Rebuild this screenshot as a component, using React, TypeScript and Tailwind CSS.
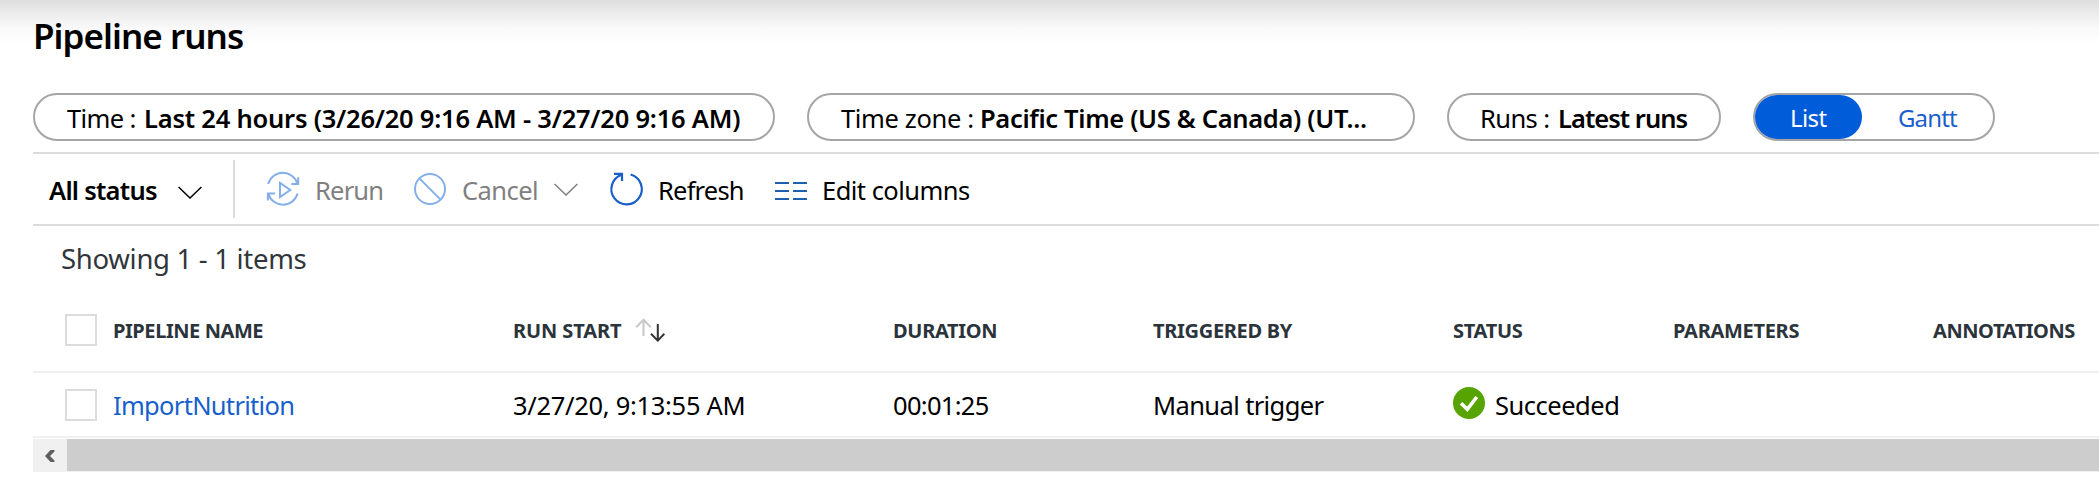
import type { ReactNode } from 'react';

function Pill({ className, children }: { className: string; children: ReactNode }) {
  return (
    <button
      className={`flex h-12 shrink-0 items-start whitespace-pre rounded-full border-2 border-[#a5a5a5] bg-white text-left text-[25.5px] leading-[46px] ${className}`}
    >
      {children}
    </button>
  );
}

function Chevron({ className }: { className: string }) {
  return (
    <svg viewBox="0 0 24 13" className={`h-[13px] w-6 shrink-0 ${className}`} fill="none" stroke="currentColor" strokeWidth="1.5">
      <path d="M.6 1 12 12 23.400 1" />
    </svg>
  );
}

function RerunIcon() {
  return (
    <svg viewBox="0 0 32 32" className="ml-8 size-8 shrink-0 overflow-visible text-[#84afe8]" fill="none" stroke="currentColor" strokeWidth="2">
      <path d="M1.200 11A15.200 15.200 0 0 1 30.400 10.600M31.200 4.200V11.100H24.300M30.600 20.500A15.200 15.200 0 0 1 1.400 20.900M.900 27.500V20.600H8" />
      <path d="M13 9.900V24.100L23.300 17Z" />
    </svg>
  );
}

function CancelIcon() {
  return (
    <svg viewBox="0 0 32 32" className="size-8 shrink-0 text-[#84afe8]" fill="none" stroke="currentColor" strokeWidth="2">
      <circle cx="16" cy="16" r="15" />
      <path d="M5.400 5.400 26.600 26.600" />
    </svg>
  );
}

function RefreshIcon() {
  return (
    <svg viewBox="0 0 33 32" className="h-8 w-[33px] shrink-0 overflow-visible text-[#175fcb]" fill="none" stroke="currentColor" strokeWidth="2.200">
      <path d="M20.600 1.500A15.200 15.200 0 1 1 11.600 1.800M4 .9H12V8" />
    </svg>
  );
}

function ColumnsIcon() {
  return (
    <svg viewBox="0 0 32 18" className="mt-1 h-[18px] w-8 shrink-0 text-[#1c5fa9]" stroke="currentColor" strokeWidth="2">
      <path d="M0 1H14M18 1H32M0 9H14M18 9H32M0 17H14M18 17H32" />
    </svg>
  );
}

function SortIcon() {
  return (
    <svg viewBox="0 0 30 24" className="ml-3.5 h-6 w-[30px] shrink-0" fill="none" strokeWidth="2">
      <path stroke="#c8c8c8" d="M8.500 18V2M1.200 9.300 8.500 1.800 15.800 9.300" />
      <path stroke="#333333" d="M22.800 6V22.500M16 15.800 22.800 22.600 29.400 15.800" />
    </svg>
  );
}

function SuccessIcon() {
  return (
    <svg viewBox="0 0 32 32" className="-mt-1 size-8 shrink-0">
      <circle cx="16" cy="16" r="16" fill="#57a300" />
      <path d="M8 16.200 14.300 22.400 23.800 10" fill="none" stroke="#fff" strokeWidth="3.600" />
    </svg>
  );
}

function Checkbox() {
  return <span className="ml-8 mr-4 size-8 shrink-0 border-2 border-[#dcdcdc] bg-white" />;
}

export default function App() {
  return (
    <div className="h-[502px] w-[2099px] overflow-hidden bg-[linear-gradient(to_bottom,#dedede_0px,#ececec_13px,#f9f9f9_28px,#ffffff_44px)] pl-[33px] font-['Noto_Sans',sans-serif] text-black">
      <header className="h-[93px]">
        <h1 className="text-[35px] font-semibold leading-[71px] tracking-[-0.95px]">Pipeline runs</h1>
      </header>

      <div className="flex h-[59px] items-start">
        <Pill className="w-[742px] pl-8">
          <span className="w-[77px] tracking-[-0.6px]">Time :</span>
          <span className="font-semibold tracking-[-0.22px]">Last 24 hours (3/26/20 9:16 AM - 3/27/20 9:16 AM)</span>
        </Pill>
        <Pill className="ml-8 w-[608px] pl-8">
          <span className="w-[139px] tracking-[-0.36px]">Time zone :</span>
          <span className="font-semibold tracking-[-0.33px]">Pacific Time (US &amp; Canada) (UT...</span>
        </Pill>
        <Pill className="ml-8 w-[274px] pl-[31px]">
          <span className="w-[78px] tracking-[-0.6px]">Runs :</span>
          <span className="font-semibold tracking-[-0.98px]">Latest runs</span>
        </Pill>
        <div className="ml-8 flex h-12 w-[242px] rounded-full border-2 border-[#a5a5a5] text-[24px] leading-[45px]">
          <button className="h-11 w-[107px] rounded-full bg-[#015cda] pl-[35px] text-left tracking-[-0.6px] text-white">List</button>
          <button className="pl-9 text-left tracking-[-0.85px] text-[#1a5fcb]">Gantt</button>
        </div>
      </div>

      <div className="flex h-[74px] items-center border-y-2 border-[#dcdcdc] text-[25.5px]">
        <div className="flex h-[58px] w-[202px] shrink-0 items-center border-r-2 border-[#dcdcdc] pl-4">
          <span className="w-[129px] pt-0.5 font-semibold tracking-[-0.75px]">All status</span>
          <Chevron className="mt-[7px]" />
        </div>
        <RerunIcon />
        <span className="ml-4 w-[99px] pt-0.5 tracking-[-0.8px] text-[#808080]">Rerun</span>
        <CancelIcon />
        <span className="ml-4 w-[92px] pt-0.5 tracking-[-0.54px] text-[#808080]">Cancel</span>
        <Chevron className="text-[#808080]" />
        <span className="w-8" />
        <RefreshIcon />
        <span className="ml-[15px] w-[117px] pt-0.5 tracking-[-0.8px]">Refresh</span>
        <ColumnsIcon />
        <span className="ml-[15px] pt-0.5 tracking-[-0.53px]">Edit columns</span>
      </div>

      <p className="h-[63px] pl-7 text-[27.5px] leading-[65px] tracking-[-0.3px] text-[#30363b]">Showing 1 - 1 items</p>

      <div className="flex h-[84px] items-center border-b-2 border-[#f0f0f0] text-[20px] font-bold tracking-[-0.3px] text-[#2b343b]">
        <Checkbox />
        <span className="w-[400px] shrink-0 pt-0.5 tracking-[-0.42px]">PIPELINE NAME</span>
        <span className="flex w-[380px] shrink-0 items-center">
          <span className="pt-0.5 tracking-[-0.1px]">RUN START</span>
          <SortIcon />
        </span>
        <span className="w-[260px] shrink-0 pt-0.5">DURATION</span>
        <span className="w-[300px] shrink-0 pt-0.5">TRIGGERED BY</span>
        <span className="w-[220px] shrink-0 pt-0.5">STATUS</span>
        <span className="w-[260px] shrink-0 pt-0.5">PARAMETERS</span>
        <span className="shrink-0 pt-0.5 tracking-[-0.42px]">ANNOTATIONS</span>
      </div>

      <div className="flex h-[65px] items-center border-b-2 border-[#f0f0f0] pt-px text-[25.5px]">
        <Checkbox />
        <a className="w-[400px] shrink-0 tracking-[-0.7px] text-[#175fcb]">ImportNutrition</a>
        <span className="w-[380px] shrink-0 tracking-[-0.3px]">3/27/20, 9:13:55 AM</span>
        <span className="w-[260px] shrink-0 tracking-[-0.7px]">00:01:25</span>
        <span className="w-[300px] shrink-0 tracking-[-0.62px]">Manual trigger</span>
        <SuccessIcon />
        <span className="ml-2.5 tracking-[-0.48px]">Succeeded</span>
      </div>

      <div className="mt-px flex h-[33px] bg-[#f0f0f0]">
        <button className="flex w-[34px] shrink-0 items-center justify-center">
          <svg viewBox="0 0 10 12" className="h-3 w-2.5" fill="#606060">
            <path d="M5.500 0H9.500V1.500L5 6 9.500 10.500V12H5.500L0 6Z" />
          </svg>
        </button>
        <div className="h-8 flex-1 bg-[#cdcdcd]" />
      </div>
    </div>
  );
}
